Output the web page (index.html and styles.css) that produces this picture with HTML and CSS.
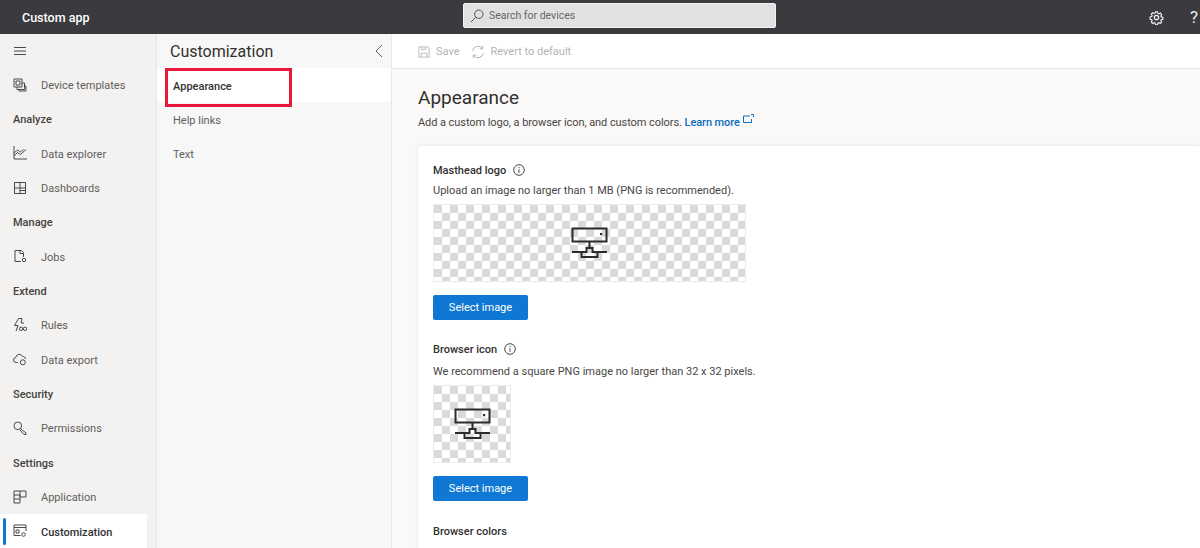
FILE: index.html
```html
<!DOCTYPE html>
<html lang="en">
<head>
    <meta charset="UTF-8">
    <meta name="viewport" content="width=device-width, initial-scale=1.0">
    <title>Custom app - Appearance</title>
    <link rel="stylesheet" href="styles.css">
</head>
<body>
    <svg class="defs" width="0" height="0" aria-hidden="true">
        <symbol id="deviceLogo" viewBox="0 0 37 32">
            <path d="M1.500 1.500h34v13h-34zM18.500 15v6M15.500 21h6v4h5v5h-16v-5h5zM1 25h10M26 25h10" fill="none" stroke="#2b2b2b" stroke-width="2"/>
            <rect x="29" y="6" width="2.200" height="2.200" fill="#2b2b2b" stroke="none"/>
        </symbol>
    </svg>

    <header class="topbar">
        <div class="app-name">Custom app</div>
        <div class="search">
            <svg class="search-icon" viewBox="0 0 14 14"><circle cx="8.800" cy="5.200" r="4.200"/><path d="M5.800 8.200L1 13"/></svg>
            <span>Search for devices</span>
        </div>
        <div class="top-actions">
            <svg class="gear" viewBox="0 0 16 16"><circle cx="8" cy="8" r="2.300"/><path d="M6.800 1h2.400l.4 2 1.300.6 1.800-1 1.600 1.700-1 1.700.5 1.300 2 .5v2.400l-2 .5-.5 1.300 1 1.700-1.600 1.700-1.800-1-1.300.6-.4 2H6.800l-.4-2-1.300-.6-1.800 1-1.600-1.700 1-1.700-.5-1.300-2-.5V7.300l2-.5.500-1.300-1-1.700 1.600-1.700 1.800 1 1.300-.6z" transform="translate(1 1) scale(.875)"/></svg>
            <span class="help">?</span>
        </div>
    </header>

    <div class="layout">
        <nav class="sidebar">
            <div class="nav-row menu-row">
                <svg class="nav-icon" viewBox="0 0 14 14"><path d="M1 3.500h12M1 7h12M1 10.500h12"/></svg>
            </div>
            <a class="nav-row">
                <svg class="nav-icon" viewBox="0 0 14 14"><path d="M1 1h8v8H1zM3 3h4v4H3zM9 5h2.500v6.500H4V9M11.500 8H13v5H6v-1.500"/></svg>
                Device templates
            </a>
            <div class="nav-row nav-heading">Analyze</div>
            <a class="nav-row">
                <svg class="nav-icon" viewBox="0 0 14 14"><path d="M1 0v13h13M1 10l3.500-3.500 3 2L13 3.500M1 7l3.500-3 3 2 3-2.500"/></svg>
                Data explorer
            </a>
            <a class="nav-row">
                <svg class="nav-icon" viewBox="0 0 14 14"><path d="M1.500 1.500h11v11h-11zM1.500 7h11M7 1.500V12.500M7 9.500h5.500"/></svg>
                Dashboards
            </a>
            <div class="nav-row nav-heading">Manage</div>
            <a class="nav-row">
                <svg class="nav-icon" viewBox="0 0 14 14"><path d="M8 12.500H2v-11h6.500l2 2V8M7 1.500v3h3"/><circle cx="11" cy="11" r="1.700"/></svg>
                Jobs
            </a>
            <div class="nav-row nav-heading">Extend</div>
            <a class="nav-row">
                <svg class="nav-icon" viewBox="0 0 14 14"><path d="M5.500.5L1.500 7.500h3.500L3 13M5.500.5h3.500L8 5h3"/><circle cx="8" cy="10.800" r="1.700"/><circle cx="12" cy="10.800" r="1.700"/></svg>
                Rules
            </a>
            <a class="nav-row">
                <svg class="nav-icon" viewBox="0 0 14 14"><path d="M5 10.500H3.200a2.500 2.500 0 0 1-.4-5A3.500 3.500 0 0 1 9.500 4.500a2.500 2.500 0 0 1 3 2.500"/><circle cx="9.800" cy="10.300" r="2.500"/></svg>
                Data export
            </a>
            <div class="nav-row nav-heading">Security</div>
            <a class="nav-row">
                <svg class="nav-icon" viewBox="0 0 14 14"><circle cx="4.800" cy="4.800" r="3.800"/><path d="M7.500 7.500l5.500 4.500v1.500h-2L6.500 8.500"/></svg>
                Permissions
            </a>
            <div class="nav-row nav-heading">Settings</div>
            <a class="nav-row">
                <svg class="nav-icon" viewBox="0 0 14 14"><path d="M1 5h6v8H1zM1 9h6M7 1h6v6H7zM1 5V1h6"/></svg>
                Application
            </a>
            <a class="nav-row active">
                <svg class="nav-icon" viewBox="0 0 14 14"><path d="M1 1h12v6M1 1v10.500h6.500M1 3.500h12M3 6h3v3H3z"/><circle cx="10.500" cy="10.500" r="1.800"/></svg>
                Customization
            </a>
        </nav>

        <aside class="subnav">
            <div class="subnav-head">
                <h2>Customization</h2>
                <svg class="collapse" viewBox="0 0 8 14"><path d="M7 1L1 7l6 6"/></svg>
            </div>
            <a class="sub-item selected">Appearance<span class="callout"></span></a>
            <a class="sub-item">Help links</a>
            <a class="sub-item">Text</a>
        </aside>

        <main class="main">
            <div class="toolbar">
                <span class="tool">
                    <svg viewBox="0 0 14 14"><path d="M1 1h10.500L13 2.500V13H1zM3.500 13V8.500h7V13M4 1v3h5V1"/></svg>
                    Save
                </span>
                <span class="tool">
                    <svg viewBox="0 0 14 14"><path d="M1.500 6A5.600 5.600 0 0 1 11.500 3.500M12.500 8A5.600 5.600 0 0 1 2.500 10.500M11.700.8v3h-3M2.300 13.200v-3h3"/></svg>
                    Revert to default
                </span>
            </div>
            <div class="content">
                <h1>Appearance</h1>
                <p class="lead">Add a custom logo, a browser icon, and custom colors. <a class="link">Learn more</a>
                    <svg class="ext" viewBox="0 0 11 9"><path d="M7 2H.5v6.500h8V5M8 .5h2.500V3"/></svg>
                </p>
                <section class="card">
                    <div class="field-title">Masthead logo
                        <svg class="info" viewBox="0 0 12 12"><circle cx="6" cy="6" r="5.300"/><path d="M6 5.300v3.500M6 3v1.200"/></svg>
                    </div>
                    <p class="hint">Upload an image no larger than 1 MB (PNG is recommended).</p>
                    <div class="checker wide"><svg class="logo"><use href="#deviceLogo"/></svg></div>
                    <button class="primary">Select image</button>

                    <div class="field-title second">Browser icon
                        <svg class="info" viewBox="0 0 12 12"><circle cx="6" cy="6" r="5.300"/><path d="M6 5.300v3.500M6 3v1.200"/></svg>
                    </div>
                    <p class="hint wider">We recommend a square PNG image no larger than 32 x 32 pixels.</p>
                    <div class="checker square"><svg class="logo"><use href="#deviceLogo"/></svg></div>
                    <button class="primary">Select image</button>

                    <div class="field-title third">Browser colors</div>
                </section>
            </div>
        </main>
    </div>
</body>
</html>
```

FILE: styles.css
```css
* {
    box-sizing: border-box;
}

html, body {
    height: 100%;
}

body {
    margin: 0;
    overflow: hidden;
    font-family: Roboto, "Noto Sans", Arial, sans-serif;
    font-size: 11px;
    color: #323130;
    background-color: #fff;
}

.defs {
    position: absolute;
}

svg {
    fill: none;
    stroke: currentColor;
    stroke-width: 1;
    flex-shrink: 0;
}

/* top bar */
.topbar {
    height: 34px;
    background-color: #3b3a3f;
    color: #fff;
    display: grid;
    grid-template-columns: 463px 313px 1fr;
    align-items: center;
}

.app-name {
    padding-left: 22px;
    font-size: 12.500px;
    font-weight: 500;
}

.search {
    height: 25px;
    margin-top: -3px;
    background-color: #e1e1e1;
    border: 1px solid #f3f3f3;
    border-radius: 2px;
    color: #66656a;
    display: flex;
    align-items: center;
    gap: 5px;
    padding-left: 6px;
    font-size: 10.500px;
}

.search-icon {
    width: 14px;
    height: 14px;
    color: #4f4e52;
}

.top-actions {
    display: flex;
    justify-content: flex-end;
    align-items: center;
    gap: 26px;
    padding-right: 2px;
}

.gear {
    width: 15px;
    height: 15px;
    color: #f2f2f2;
    stroke-width: 1.400;
}

.help {
    font-size: 17px;
    color: #eee;
}

/* three columns */
.layout {
    height: 514px;
    display: grid;
    grid-template-columns: 157px 235px 1fr;
}

.sidebar {
    background-color: #f3f2f1;
    border-right: 1px solid #e6e5e4;
    padding-right: 9px;
    overflow: hidden;
}

.nav-row {
    height: 34.330px;
    display: flex;
    align-items: center;
    padding-left: 13px;
    padding-top: 1px;
    color: #605e5c;
}

.menu-row {
    height: 34px;
}

.nav-icon {
    width: 14px;
    height: 14px;
    margin-right: 14px;
    margin-top: -2px;
    color: #4a4846;
}

.nav-heading {
    font-weight: 500;
    color: #454341;
}

.nav-row.active {
    position: relative;
    padding-top: 2px;
    background-color: #fff;
    color: #323130;
    font-weight: 500;
}

.nav-row.active::before {
    content: "";
    position: absolute;
    left: 3px;
    top: 4px;
    bottom: 4px;
    width: 3px;
    border-radius: 2px;
    background-color: #0f78d4;
}

.subnav {
    background-color: #f7f7f7;
    border-right: 1px solid #e8e8e8;
}

.subnav-head {
    height: 34px;
    display: flex;
    justify-content: space-between;
    align-items: center;
    padding: 0 8px 0 13px;
}

.subnav-head h2 {
    margin: 0;
    font-size: 16px;
    font-weight: 400;
    color: #323130;
}

.collapse {
    width: 8px;
    height: 14px;
    color: #605e5c;
}

.sub-item {
    height: 34px;
    display: flex;
    align-items: center;
    padding-left: 16px;
    padding-top: 2px;
    color: #605e5c;
}

.sub-item.selected {
    position: relative;
    background-color: #fff;
    color: #323130;
    font-weight: 500;
}

.callout {
    position: absolute;
    left: 8px;
    top: 0;
    width: 127px;
    height: 39px;
    border: 3px solid #e8173c;
}

/* main area */
.main {
    display: flex;
    flex-direction: column;
    min-width: 0;
}

.toolbar {
    height: 35px;
    background-color: #fff;
    border-bottom: 1px solid #e8e7e6;
    display: flex;
    align-items: center;
    gap: 11px;
    padding-left: 26px;
    padding-top: 1px;
    color: #b5b4b3;
}

.tool {
    display: flex;
    align-items: center;
    gap: 6px;
}

.tool svg {
    width: 12px;
    height: 12px;
}

.tool + .tool svg {
    width: 14px;
    height: 14px;
}

.content {
    flex: 1;
    background-color: #faf9f8;
    padding: 17px 0 0 26px;
    overflow: hidden;
}

.content h1 {
    margin: 0;
    font-size: 19px;
    font-weight: 400;
    line-height: 24px;
    color: #323130;
}

.lead {
    margin: 4px 0 0;
    line-height: 16px;
    letter-spacing: -0.070px;
    color: #484644;
}

.link {
    color: #0f6cbd;
    font-weight: 500;
}

.ext {
    width: 11px;
    height: 9px;
    color: #0f6cbd;
    vertical-align: 3px;
}

.card {
    margin-top: 15px;
    height: 420px;
    background-color: #fff;
    border-radius: 2px 0 0 2px;
    box-shadow: 0 0 3px rgba(0, 0, 0, 0.12);
    padding: 16px 15px;
}

.field-title {
    display: flex;
    align-items: center;
    gap: 7px;
    height: 16px;
    font-weight: 500;
    color: #323130;
}

.field-title.second {
    margin-top: 21px;
}

.field-title.third {
    margin-top: 22px;
}

.info {
    width: 12px;
    height: 12px;
    color: #484644;
}

.hint {
    margin: 5px 0;
    line-height: 16px;
    color: #484644;
}

.hint.wider {
    margin-top: 7px;
    margin-bottom: 5px;
}

.checker {
    height: 78px;
    display: flex;
    justify-content: center;
    align-items: center;
    border: 1px solid #ececec;
    background-color: #fff;
    background-image: conic-gradient(#fff 25%, #dadada 0 50%, #fff 0 75%, #dadada 0);
    background-size: 16px 16px;
}

.wide {
    width: 313px;
}

.square {
    width: 78px;
}

.logo {
    width: 37px;
    height: 32px;
}

.primary {
    display: block;
    width: 95px;
    height: 25px;
    margin-top: 13px;
    padding: 0;
    border: none;
    border-radius: 2px;
    background-color: #0f78d4;
    color: #fff;
    font-family: inherit;
    font-size: 11px;
    cursor: pointer;
}
```
